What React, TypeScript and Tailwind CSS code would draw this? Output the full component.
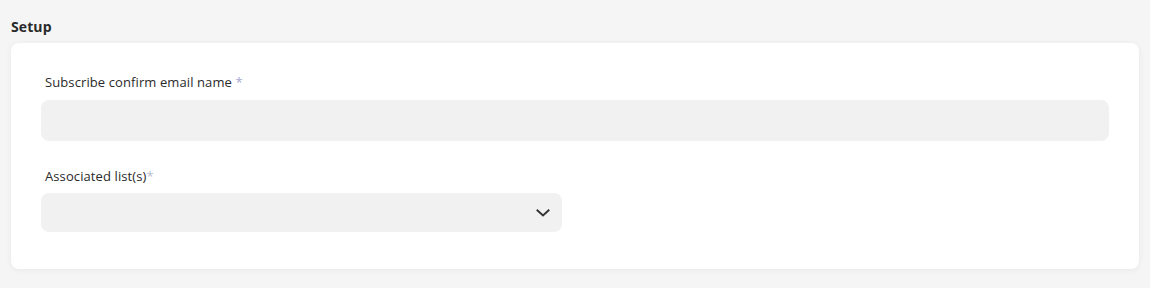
import React from "react";

export default function App() {
  return (
    <div
      className="w-[1150px] h-[288px] bg-[#f5f5f5] pt-[18px] pl-[11px] pr-[11px]"
      style={{ fontFamily: '"Open Sans", "Noto Sans", sans-serif' }}
    >
      <div className="text-[14px] leading-[18px] font-bold text-[#2a2a2a] mb-[7px] tracking-[0.1px]">Setup</div>
      <div className="bg-white rounded-[8px] shadow-[0_1px_6px_rgba(0,0,0,0.06)] h-[226px] pt-[30px] px-[30px]">
        <label className="block pl-[4px] text-[13px] leading-[18px] font-medium text-[#2a2a2a] tracking-[0.1px]">
          Subscribe confirm email name <span className="text-[#a9a6d2]">*</span>
        </label>
        <div className="mt-[9px] h-[41px] w-[1068px] rounded-[8px] bg-[#f1f1f1]" />
        <label className="block mt-[26px] pl-[4px] text-[13px] leading-[18px] font-medium text-[#2a2a2a] tracking-[0.1px]">
          Associated list(s)<span className="text-[#b7bccb]">*</span>
        </label>
        <div className="mt-[8px] h-[39px] w-[521px] rounded-[8px] bg-[#f1f1f1] flex items-center justify-end pr-[11px]">
          <svg width="16" height="16" viewBox="0 0 16 16" fill="none">
            <path d="M2.5 5.5L8 10.5L13.5 5.5" stroke="#333" strokeWidth="2" strokeLinecap="square" />
          </svg>
        </div>
      </div>
    </div>
  );
}
